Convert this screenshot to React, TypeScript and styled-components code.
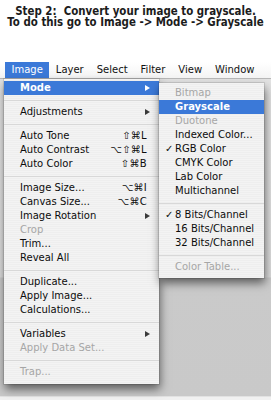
import React from "react";
import styled, { createGlobalStyle, css } from "styled-components";

const GlobalStyle = createGlobalStyle`
  html, body { margin: 0; padding: 0; background: #ffffff; }
  body { font-family: "DejaVu Sans", "Liberation Sans", sans-serif; }
  * { box-sizing: border-box; }
`;

const Page = styled.div`
  width: 271px;
  height: 400px;
  overflow: hidden;
  display: flex;
  flex-direction: column;
  background: #ffffff;
`;

const Caption = styled.div`
  height: 62px;
  padding-top: 6px;
  text-align: center;
  white-space: pre;
  font-family: "DejaVu Sans Condensed", "DejaVu Sans", sans-serif;
  font-stretch: condensed;
  font-weight: bold;
  font-size: 11.4px;
  line-height: 11px;
  color: #1c1c1c;
`;

const MenuBar = styled.div`
  height: 17px;
  display: flex;
  padding-left: 5px;
  background: linear-gradient(#ffffff, #f4f4f4);
  border-bottom: 1px solid #b8b8b8;
`;

const BarItem = styled.div<{ $active?: boolean }>`
  padding: 0 6.5px;
  height: 16px;
  line-height: 16px;
  font-size: 10px;
  color: #111;
  ${(p) =>
    p.$active &&
    css`
      background: #3b79d8;
      color: #ffffff;
    `}
`;

const Desktop = styled.div`
  position: relative;
  height: 317px;
  background: linear-gradient(#e2e2e2 0, #dcdcdc 198px, #cacaca 199px, #c9c9c9 100%);
`;

const Footer = styled.div`
  flex: 1;
  background: #f1f1f1;
  border-top: 1px solid #e2e2e2;
`;

const MenuPanel = styled.div<{ $left: number; $top: number; $width: number; $pt: number; $pb: number; $z: number }>`
  position: absolute;
  left: ${(p) => p.$left}px;
  top: ${(p) => p.$top}px;
  width: ${(p) => p.$width}px;
  padding: ${(p) => p.$pt}px 0 ${(p) => p.$pb}px;
  z-index: ${(p) => p.$z};
  background: repeating-linear-gradient(#f3f3f3 0 1px, #eeeeee 1px 2px);
  box-shadow: 0 0 0 1px rgba(0, 0, 0, 0.1), 1px 5px 9px rgba(0, 0, 0, 0.55);
`;

const Item = styled.div<{ $active?: boolean; $disabled?: boolean }>`
  height: 14px;
  display: flex;
  align-items: center;
  padding: 0 8px 0 6px;
  font-size: 10px;
  line-height: 14px;
  white-space: nowrap;
  color: ${(p) => (p.$disabled ? "#a6a6a6" : "#0c0c0c")};
  ${(p) =>
    p.$active &&
    css`
      background: #3b79d8;
      color: #ffffff;
      font-weight: bold;
    `}
`;

const Gutter = styled.span`
  width: 10px;
  flex: none;
  font-size: 10px;
`;

const Label = styled.span`
  flex: 1;
`;

const Shortcut = styled.span`
  margin-right: 4px;
  font-size: 10px;
  letter-spacing: 0.3px;
`;

const Arrow = styled.span<{ $light?: boolean }>`
  width: 0;
  height: 0;
  margin-right: 1px;
  border-left: 5px solid ${(p) => (p.$light ? "#ffffff" : "#3a3a3a")};
  border-top: 3.5px solid transparent;
  border-bottom: 3.5px solid transparent;
`;

const Separator = styled.div`
  height: 10px;
  display: flex;
  align-items: center;
  &::after {
    content: "";
    flex: 1;
    height: 1px;
    background: #d8d8d8;
  }
`;

type Entry =
  | { sep: true }
  | {
      sep?: false;
      label: string;
      shortcut?: string;
      sub?: boolean;
      disabled?: boolean;
      active?: boolean;
      check?: boolean;
    };

const imageMenu: Entry[] = [
  { label: "Mode", sub: true, active: true },
  { sep: true },
  { label: "Adjustments", sub: true },
  { sep: true },
  { label: "Auto Tone", shortcut: "⇧⌘L" },
  { label: "Auto Contrast", shortcut: "⌥⇧⌘L" },
  { label: "Auto Color", shortcut: "⇧⌘B" },
  { sep: true },
  { label: "Image Size...", shortcut: "⌥⌘I" },
  { label: "Canvas Size...", shortcut: "⌥⌘C" },
  { label: "Image Rotation", sub: true },
  { label: "Crop", disabled: true },
  { label: "Trim..." },
  { label: "Reveal All" },
  { sep: true },
  { label: "Duplicate..." },
  { label: "Apply Image..." },
  { label: "Calculations..." },
  { sep: true },
  { label: "Variables", sub: true },
  { label: "Apply Data Set...", disabled: true },
  { sep: true },
  { label: "Trap...", disabled: true },
];

const modeMenu: Entry[] = [
  { label: "Bitmap", disabled: true },
  { label: "Grayscale", active: true },
  { label: "Duotone", disabled: true },
  { label: "Indexed Color..." },
  { label: "RGB Color", check: true },
  { label: "CMYK Color" },
  { label: "Lab Color" },
  { label: "Multichannel" },
  { sep: true },
  { label: "8 Bits/Channel", check: true },
  { label: "16 Bits/Channel" },
  { label: "32 Bits/Channel" },
  { sep: true },
  { label: "Color Table...", disabled: true },
];

const renderEntries = (entries: Entry[]) =>
  entries.map((e, i) =>
    e.sep ? (
      <Separator key={i} />
    ) : (
      <Item key={i} $active={e.active} $disabled={e.disabled}>
        <Gutter>{e.check ? "✓" : ""}</Gutter>
        <Label>{e.label}</Label>
        {e.shortcut && <Shortcut>{e.shortcut}</Shortcut>}
        {e.sub && <Arrow $light={e.active} />}
      </Item>
    )
  );

const menuBarItems = ["Image", "Layer", "Select", "Filter", "View", "Window"];

export default function App() {
  return (
    <>
      <GlobalStyle />
      <Page>
        <Caption>
          {"Step 2:  Convert your image to grayscale.\nTo do this go to Image -> Mode -> Grayscale"}
        </Caption>
        <MenuBar>
          {menuBarItems.map((m, i) => (
            <BarItem key={m} $active={i === 0}>
              {m}
            </BarItem>
          ))}
        </MenuBar>
        <Desktop>
          <MenuPanel $left={4} $top={0} $width={155} $pt={2} $pb={5} $z={1}>
            {renderEntries(imageMenu)}
          </MenuPanel>
          <MenuPanel $left={159} $top={4} $width={105} $pt={3} $pb={4} $z={2}>
            {renderEntries(modeMenu)}
          </MenuPanel>
        </Desktop>
        <Footer />
      </Page>
    </>
  );
}
